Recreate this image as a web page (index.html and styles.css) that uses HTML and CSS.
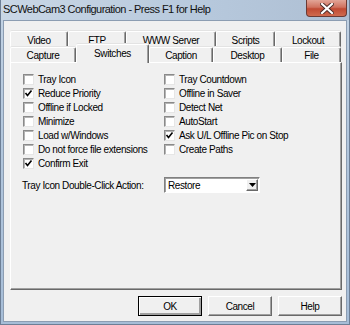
FILE: index.html
```html
<!DOCTYPE html>
<html lang="en">
<head>
  <meta charset="UTF-8">
  <title>SCWebCam3 Configuration</title>
  <link rel="stylesheet" href="styles.css">
</head>
<body>
  <div class="window">
    <div class="titlebar">
      <span class="title">SCWebCam3 Configuration - Press F1 for Help</span>
      <div class="close">
        <svg width="14" height="11" viewBox="0 0 14 11">
          <path d="M2 1 L12 10 M12 1 L2 10" stroke="#4a2a26" stroke-width="4" stroke-linecap="square"/>
          <path d="M2 1 L12 10 M12 1 L2 10" stroke="#ffffff" stroke-width="2.2" stroke-linecap="square"/>
        </svg>
      </div>
    </div>

    <div class="client">
      <div class="tabs">
        <div class="tab-row">
          <div class="tab w58">Video</div>
          <div class="tab w58">FTP</div>
          <div class="tab w90">WWW Server</div>
          <div class="tab w59">Scripts</div>
          <div class="tab w66">Lockout</div>
        </div>
        <div class="tab-row front">
          <div class="tab w66">Capture</div>
          <div class="tab w73 active">Switches</div>
          <div class="tab w64">Caption</div>
          <div class="tab w69">Desktop</div>
          <div class="tab w59">File</div>
        </div>
      </div>

      <div class="page">
        <div class="checks">
          <div class="col">
            <label class="check"><span class="box"></span>Tray Icon</label>
            <label class="check"><span class="box on"><svg width="9" height="9" viewBox="0 0 9 9"><path d="M1.5 4 L3.5 6.5 L7.5 1.5" stroke="#000" stroke-width="1.6" fill="none"/></svg></span>Reduce Priority</label>
            <label class="check"><span class="box"></span>Offline if Locked</label>
            <label class="check"><span class="box"></span>Minimize</label>
            <label class="check"><span class="box"></span>Load w/Windows</label>
            <label class="check"><span class="box"></span>Do not force file extensions</label>
            <label class="check"><span class="box on"><svg width="9" height="9" viewBox="0 0 9 9"><path d="M1.5 4 L3.5 6.5 L7.5 1.5" stroke="#000" stroke-width="1.6" fill="none"/></svg></span>Confirm Exit</label>
          </div>
          <div class="col">
            <label class="check"><span class="box"></span>Tray Countdown</label>
            <label class="check"><span class="box"></span>Offline in Saver</label>
            <label class="check"><span class="box"></span>Detect Net</label>
            <label class="check"><span class="box"></span>AutoStart</label>
            <label class="check"><span class="box on"><svg width="9" height="9" viewBox="0 0 9 9"><path d="M1.5 4 L3.5 6.5 L7.5 1.5" stroke="#000" stroke-width="1.6" fill="none"/></svg></span>Ask U/L Offline Pic on Stop</label>
            <label class="check"><span class="box"></span>Create Paths</label>
          </div>
        </div>

        <div class="action-row">
          <span class="action-label">Tray Icon Double-Click Action:</span>
          <div class="combo">
            <span class="combo-text">Restore</span>
            <span class="combo-btn">
              <svg width="7" height="4" viewBox="0 0 7 4"><path d="M0 0 H7 L3.5 4 Z" fill="#000"/></svg>
            </span>
          </div>
        </div>
      </div>

      <div class="buttons">
        <div class="btn default">OK</div>
        <div class="btn">Cancel</div>
        <div class="btn">Help</div>
      </div>
    </div>
  </div>
</body>
</html>
```

FILE: styles.css
```css
body {
  margin: 0;
  font-family: 'Liberation Sans', Arial, sans-serif;
  font-size: 10px;
  letter-spacing: -0.4px;
  color: #000;
}

.window {
  width: 350px;
  height: 325px;
  box-sizing: border-box;
  display: flex;
  flex-direction: column;
  background: linear-gradient(to bottom, #c3d3e4 0%, #b3c7dd 40%, #a6bdd7 100%);
  border: 1px solid #6d7f96;
  border-top: none;
}

.titlebar {
  height: 20px;
  display: flex;
  justify-content: space-between;
  align-items: flex-start;
  background: linear-gradient(to right, #c9d7e6, #b6c8dc 60%, #aebfd3);
}

.title {
  font-size: 11px;
  letter-spacing: -0.55px;
  color: #111;
  padding: 3px 0 0 2px;
}

.close {
  width: 41px;
  height: 17px;
  margin-right: 2px;
  box-sizing: border-box;
  display: flex;
  align-items: center;
  justify-content: center;
  border: 1px solid #6b3a34;
  border-top: none;
  border-radius: 0 0 4px 4px;
  background: linear-gradient(to bottom, #e2a597 0%, #d0725f 45%, #c04a33 55%, #cf6a4e 100%);
}

.client {
  flex: 1;
  margin: 0 2px 2px 2px;
  background: #f0f0f0;
  display: flex;
  flex-direction: column;
  padding: 10px 4px 5px 6px;
  border: 1px solid #8c9db2;
}

.tabs {
  height: 31px;
  display: flex;
  flex-direction: column;
}

.tab-row {
  display: flex;
  height: 16px;
}

.tab-row.front {
  height: 15px;
}

.tab {
  box-sizing: border-box;
  display: flex;
  align-items: center;
  justify-content: center;
  background: #f0f0f0;
  border-top: 1px solid #fff;
  border-left: 1px solid #fff;
  border-right: 1px solid #696969;
  box-shadow: inset -1px 0 #a0a0a0, 0 -1px #e3e3e3;
  border-radius: 2px 2px 0 0;
  padding-top: 1px;
}

.tab.active {
  position: relative;
  z-index: 1;
  height: 19px;
  margin-top: -3px;
  padding-bottom: 3px;
}

.w58 { width: 58px; }
.w59 { width: 59px; }
.w64 { width: 64px; }
.w66 { width: 66px; }
.w69 { width: 69px; }
.w73 { width: 73px; }
.w90 { width: 90px; }

.page {
  flex: 1;
  border-top: 1px solid #fff;
  border-left: 1px solid #fff;
  border-right: 1px solid #696969;
  border-bottom: 1px solid #696969;
  box-shadow: inset -1px -1px #a0a0a0;
  padding: 9px 0 0 12px;
}

.checks {
  display: flex;
}

.col {
  display: flex;
  flex-direction: column;
}

.col:first-child {
  width: 141px;
}

.check {
  height: 14px;
  display: flex;
  align-items: center;
  gap: 4px;
  white-space: nowrap;
}

.box {
  width: 11px;
  height: 11px;
  box-sizing: border-box;
  background: #fff;
  border: 1px solid;
  border-color: #8a8a8a #e6e6e6 #e6e6e6 #8a8a8a;
  box-shadow: inset 1px 1px #b4b4b4;
  display: flex;
  align-items: center;
  justify-content: center;
}

.action-row {
  display: flex;
  align-items: center;
  margin-top: 7px;
  margin-left: -1px;
}

.action-label {
  width: 142px;
  white-space: nowrap;
}

.combo {
  width: 96px;
  height: 16px;
  box-sizing: border-box;
  background: #fff;
  border: 1px solid;
  border-color: #808080 #fff #fff #808080;
  box-shadow: inset 1px 1px #a0a0a0;
  display: flex;
  align-items: center;
  justify-content: space-between;
  padding: 0 1px 0 3px;
}

.combo-btn {
  width: 12px;
  height: 12px;
  box-sizing: border-box;
  background: #f0f0f0;
  border: 1px solid;
  border-color: #fff #696969 #696969 #fff;
  box-shadow: inset -1px -1px #a0a0a0;
  display: flex;
  align-items: center;
  justify-content: center;
}

.buttons {
  display: flex;
  justify-content: flex-end;
  gap: 6px;
  margin-top: 6px;
}

.btn {
  width: 64px;
  height: 20px;
  box-sizing: border-box;
  display: flex;
  align-items: center;
  justify-content: center;
  background: #f0f0f0;
  border: 1px solid;
  border-color: #fff #696969 #696969 #fff;
  box-shadow: inset -1px -1px #a0a0a0;
}

.btn.default {
  border: 1px solid #000;
  box-shadow: inset 1px 1px #fff, inset -2px -2px #a0a0a0, inset -1px -1px #696969;
}
```
